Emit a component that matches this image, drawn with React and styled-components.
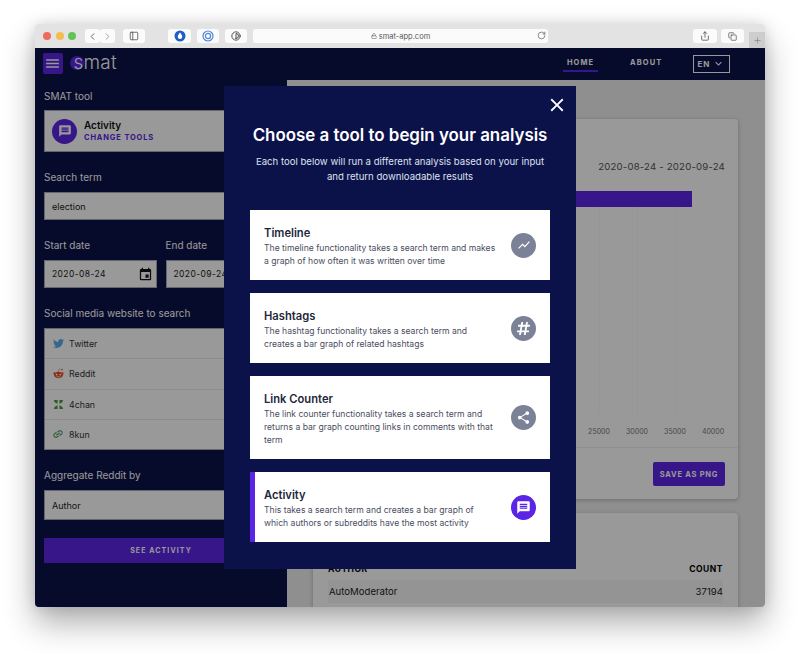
import React from "react";
import styled, { createGlobalStyle } from "styled-components";
import { MdMenu, MdMessage, MdEvent, MdClose, MdShowChart, MdShare, MdKeyboardArrowDown, MdLink } from "react-icons/md";
import { FaTwitter, FaRedditAlien, FaHashtag } from "react-icons/fa";
import { ChevronLeft, ChevronRight, PanelLeft, Lock, RotateCw, Share, Copy, Plus, Contrast } from "lucide-react";

const NAVY = "#0b1149";
const PURPLE = "#5a25e4";

const GlobalStyle = createGlobalStyle`
  html, body { margin: 0; padding: 0; background: #fff; }
  * { box-sizing: border-box; }
  body { font-family: "Inter", "Liberation Sans", sans-serif; }
`;

const Page = styled.div`
  width: 800px;
  height: 654px;
  padding: 24px 35px 47px;
  overflow: hidden;
`;

const Window = styled.div`
  position: relative;
  height: 583px;
  border-radius: 4px;
  display: flex;
  flex-direction: column;
  box-shadow: 0 16px 32px rgba(0, 0, 0, 0.32), 0 0 14px rgba(0, 0, 0, 0.12);
`;

const Chrome = styled.div`
  height: 24px;
  flex: none;
  background: #e3e3e3;
  border-radius: 4px 4px 0 0;
  display: flex;
  align-items: center;
  padding-left: 8px;
  position: relative;
`;

const Lights = styled.div`
  display: flex;
  gap: 4.5px;
  margin-right: 9px;
`;

const Light = styled.span`
  width: 8px;
  height: 8px;
  border-radius: 50%;
  background: ${(p) => p.$color};
`;

const ToolButton = styled.div`
  height: 14px;
  width: ${(p) => p.$w || 22}px;
  margin-left: ${(p) => p.$ml || 0}px;
  background: #fbfbfb;
  border-radius: 3px;
  display: flex;
  align-items: center;
  justify-content: center;
  color: #555;
  flex: none;
`;

const UrlBar = styled.div`
  width: 295px;
  height: 14px;
  margin-left: 6px;
  background: #fbfbfb;
  border-radius: 3px;
  display: flex;
  align-items: center;
  justify-content: center;
  gap: 2px;
  font-size: 7.5px;
  color: #555;
  position: relative;
`;

const Reload = styled.span`
  position: absolute;
  right: 2px;
  top: 2px;
  color: #666;
  display: flex;
`;

const NewTab = styled.div`
  position: absolute;
  right: 0;
  bottom: 0;
  width: 16px;
  height: 16px;
  background: #cdcdcd;
  display: flex;
  align-items: center;
  justify-content: center;
  color: #888;
`;

const App_ = styled.div`
  position: relative;
  flex: 1;
  display: flex;
  flex-direction: column;
  overflow: hidden;
  border-radius: 0 0 4px 4px;
  background: #eeeeee;
`;

const Nav = styled.div`
  height: 32px;
  flex: none;
  background: ${NAVY};
  display: flex;
  align-items: center;
  padding: 0 35px 0 8px;
  color: #fff;
`;

const MenuButton = styled.div`
  width: 20px;
  height: 21px;
  margin-top: -2px;
  border-radius: 2px;
  background: ${PURPLE};
  display: flex;
  align-items: center;
  justify-content: center;
  font-size: 17px;
`;

const Logo = styled.div`
  width: 49px;
  margin-left: 7px;
  margin-top: -3px;
  font-size: 19px;
  line-height: 20px;
  letter-spacing: 0.2px;
  font-weight: 300;
  display: flex;
  align-items: center;
  color: #fff;
`;

const LogoS = styled.span`
  width: 14px;
  height: 14px;
  border-radius: 50%;
  background: ${PURPLE};
  display: flex;
  align-items: center;
  justify-content: flex-end;
  line-height: 12px;
`;

const NavLink = styled.div`
  margin-left: ${(p) => p.$ml}px;
  width: ${(p) => p.$w}px;
  height: 32px;
  display: flex;
  align-items: center;
  justify-content: center;
  padding-bottom: 4px;
  font-size: 7.5px;
  font-weight: 700;
  letter-spacing: 1.1px;
  position: relative;
  &::after {
    content: "";
    display: ${(p) => (p.$active ? "block" : "none")};
    position: absolute;
    left: 0;
    right: 0;
    bottom: 8px;
    height: 2px;
    background: ${PURPLE};
  }
`;

const LangBox = styled.div`
  margin-left: 27px;
  width: 38px;
  height: 18px;
  margin-top: -1px;
  border: 1px solid #fff;
  display: flex;
  align-items: center;
  justify-content: center;
  gap: 2px;
  font-size: 8px;
  font-weight: 700;
  letter-spacing: 1px;
`;

const Body = styled.div`
  flex: 1;
  display: flex;
  min-height: 0;
`;

const Sidebar = styled.div`
  width: 252px;
  flex: none;
  background: ${NAVY};
  padding: 9px 9px 0;
  display: flex;
  flex-direction: column;
`;

const Label = styled.div`
  font-size: 10px;
  line-height: 14px;
  color: #fff;
  margin-bottom: 8px;
`;

const Field = styled.div`
  margin-bottom: 18px;
  flex: ${(p) => p.$flex || "none"};
  min-width: 0;
`;

const FirstLabel = styled(Label)`
  margin-bottom: 7px;
`;

const ToolBox = styled.div`
  height: 42px;
  background: #fff;
  border: 1px solid #aab;
  display: flex;
  align-items: center;
  padding-left: 7px;
  gap: 7px;
`;

const ToolCircle = styled.div`
  width: 25px;
  height: 25px;
  border-radius: 50%;
  background: ${PURPLE};
  color: #fff;
  font-size: 14px;
  display: flex;
  align-items: center;
  justify-content: center;
`;

const ToolName = styled.div`
  font-size: 10px;
  font-weight: 600;
  line-height: 13px;
  color: #111;
`;

const ToolChange = styled.div`
  font-size: 7.5px;
  font-weight: 700;
  letter-spacing: 0.85px;
  line-height: 12px;
  color: ${PURPLE};
`;

const Input = styled.div`
  height: ${(p) => p.$h || 28}px;
  background: #fff;
  border: 1px solid #aab;
  display: flex;
  align-items: center;
  justify-content: space-between;
  padding: 0 3px 0 7px;
  font-size: ${(p) => (p.$date ? 8.5 : 9)}px;
  letter-spacing: ${(p) => (p.$date ? "0.4px" : "0")};
  color: #222;
`;

const DateRow = styled.div`
  display: flex;
  gap: 9px;
`;

const SiteList = styled.div`
  background: #fff;
  border: 1px solid #aab;
  height: 122px;
  display: flex;
  flex-direction: column;
`;

const Site = styled.div`
  flex: 1;
  display: flex;
  align-items: center;
  gap: 5px;
  padding-left: 7px;
  font-size: 8.8px;
  color: #333;
  border-top: ${(p) => (p.$first ? "0" : "1px solid #e9e9e9")};
`;

const SiteIcon = styled.span`
  width: 12px;
  display: flex;
  justify-content: center;
  font-size: 11px;
  color: ${(p) => p.$color};
`;

const SeeButton = styled.div`
  height: 25px;
  background: ${PURPLE};
  color: #fff;
  display: flex;
  align-items: center;
  justify-content: center;
  font-size: 7px;
  font-weight: 700;
  letter-spacing: 1.1px;
`;

const Content = styled.div`
  flex: 1;
  padding: 39px 27px 0 26px;
  display: flex;
  flex-direction: column;
  gap: 14px;
  min-width: 0;
`;

const Card = styled.div`
  background: #fff;
  border-radius: 4px;
  box-shadow: 0 1px 4px rgba(0, 0, 0, 0.25);
  flex: none;
`;

const ChartCard = styled(Card)`
  height: 380px;
  display: flex;
  flex-direction: column;
`;

const RangeText = styled.div`
  text-align: right;
  padding: 41px 13px 0 0;
  height: 72px;
  font-size: 9.6px;
  line-height: 14px;
  letter-spacing: 0.2px;
  color: #555;
`;

const Plot = styled.div`
  margin-left: 96px;
  width: 304px;
  height: 224px;
  background-image: repeating-linear-gradient(
    to right,
    #fafafa 0,
    #fafafa 1px,
    transparent 1px,
    transparent 38px
  );
`;

const Bar = styled.div`
  height: 16px;
  background: ${PURPLE};
`;

const Axis = styled.div`
  margin-left: 267px;
  display: flex;
  height: 32px;
  align-items: center;
`;

const Tick = styled.div`
  width: 38px;
  text-align: center;
  font-size: 7px;
  color: #777;
`;

const CardFoot = styled.div`
  flex: 1;
  border-top: 1px solid #f0f0f0;
  display: flex;
  justify-content: flex-end;
  align-items: flex-start;
  padding: 14px 13px 0 0;
`;

const SaveButton = styled.div`
  width: 72px;
  height: 24px;
  border-radius: 2px;
  background: ${PURPLE};
  color: #fff;
  display: flex;
  align-items: center;
  justify-content: center;
  font-size: 7.5px;
  font-weight: 700;
  letter-spacing: 0.75px;
`;

const TableCard = styled(Card)`
  height: 120px;
  padding: 49px 15px 0 15px;
`;

const HeadRow = styled.div`
  display: flex;
  justify-content: space-between;
  font-size: 8.5px;
  line-height: 14px;
  font-weight: 700;
  letter-spacing: 0.5px;
  color: #000;
  padding-bottom: 4px;
`;

const DataRow = styled.div`
  display: flex;
  justify-content: space-between;
  align-items: center;
  height: 23px;
  background: #f7f7f7;
  padding-left: 1px;
  font-size: 9.6px;
  color: #222;
`;

const Overlay = styled.div`
  position: absolute;
  inset: 0;
  background: rgba(0, 0, 0, 0.4);
  display: flex;
  align-items: center;
  justify-content: center;
`;

const Modal = styled.div`
  position: relative;
  width: 352px;
  height: 483px;
  background: ${NAVY};
  padding: 38px 26px 0;
  color: #fff;
`;

const CloseButton = styled.div`
  position: absolute;
  top: 8px;
  right: 8px;
  font-size: 22px;
  line-height: 0;
  color: #fff;
`;

const ModalTitle = styled.div`
  font-size: 16.9px;
  line-height: 22px;
  font-weight: 600;
  text-align: center;
  white-space: nowrap;
`;

const ModalSub = styled.div`
  margin-top: 8px;
  font-size: 9.6px;
  line-height: 15px;
  text-align: center;
  color: #dfe1ee;
  margin-bottom: 26px;
`;

const Options = styled.div`
  display: flex;
  flex-direction: column;
  gap: 13px;
`;

const Option = styled.div`
  background: #fff;
  border-left: ${(p) => (p.$active ? `5px solid ${PURPLE}` : "0")};
  padding: 16px 14px 12px ${(p) => (p.$active ? 9 : 14)}px;
  display: flex;
  align-items: center;
  justify-content: space-between;
`;

const OptionText = styled.div`
  width: 232px;
`;

const OptionName = styled.div`
  font-size: 11.2px;
  line-height: 15px;
  font-weight: 600;
  color: #23263a;
`;

const OptionDesc = styled.div`
  margin-top: 1px;
  font-size: 8.6px;
  line-height: 13px;
  color: #4a4d5e;
`;

const OptionIcon = styled.div`
  width: 25px;
  height: 25px;
  margin-top: -4px;
  border-radius: 50%;
  background: ${(p) => (p.$active ? PURPLE : "#7b8197")};
  color: #fff;
  display: flex;
  align-items: center;
  justify-content: center;
  font-size: ${(p) => p.$size || 14}px;
`;

const FourChanIcon = () => (
  <svg width="11" height="11" viewBox="0 0 12 12" fill="currentColor">
    <path d="M1 1h4v4C3 5 1 3 1 1zM11 1H7v4c2 0 4-2 4-4zM1 11h4V7c-2 0-4 2-4 4zM11 11H7V7c2 0 4 2 4 4z" />
  </svg>
);

const DropIcon = () => (
  <svg width="12" height="12" viewBox="0 0 12 12">
    <circle cx="6" cy="6" r="5.5" fill="#1f5fc4" />
    <path d="M6 2.5C7.5 4.5 8.2 5.5 8.2 6.8a2.2 2.2 0 0 1-4.4 0C3.8 5.5 4.5 4.5 6 2.5z" fill="#fff" />
  </svg>
);

const RingsIcon = () => (
  <svg width="12" height="12" viewBox="0 0 12 12" fill="none" stroke="#4f86d8">
    <circle cx="6" cy="6" r="5" strokeWidth="1.2" />
    <circle cx="6" cy="6" r="2.6" strokeWidth="1.2" />
  </svg>
);

const sites = [
  { name: "Twitter", color: "#55acee", icon: <FaTwitter /> },
  { name: "Reddit", color: "#e8562a", icon: <FaRedditAlien /> },
  { name: "4chan", color: "#4f9a3d", icon: <FourChanIcon /> },
  { name: "8kun", color: "#3c9a4c", icon: <MdLink style={{ transform: "rotate(-30deg)", fontSize: 14 }} /> },
];

const tools = [
  {
    name: "Timeline",
    desc: "The timeline functionality takes a search term and makes a graph of how often it was written over time",
    icon: <MdShowChart />,
    size: 14,
  },
  {
    name: "Hashtags",
    desc: "The hashtag functionality takes a search term and creates a bar graph of related hashtags",
    icon: <FaHashtag />,
    size: 15,
  },
  {
    name: "Link Counter",
    desc: "The link counter functionality takes a search term and returns a bar graph counting links in comments with that term",
    icon: <MdShare />,
    size: 15,
  },
  {
    name: "Activity",
    desc: "This takes a search term and creates a bar graph of which authors or subreddits have the most activity",
    icon: <MdMessage />,
    size: 15,
    active: true,
  },
];

const ticks = [25000, 30000, 35000, 40000];
const topCount = 37194;

const App = () => {
  return (
    <Page>
      <GlobalStyle />
      <Window>
        <Chrome>
          <Lights>
            <Light $color="#ee6a5f" />
            <Light $color="#f5bd4f" />
            <Light $color="#61c454" />
          </Lights>
          <ToolButton $w={15}><ChevronLeft size={11} /></ToolButton>
          <ToolButton $w={15}><ChevronRight size={11} color="#999" /></ToolButton>
          <ToolButton $ml={8}><PanelLeft size={10} /></ToolButton>
          <ToolButton $ml={23} $w={23}><DropIcon /></ToolButton>
          <ToolButton $ml={6}><RingsIcon /></ToolButton>
          <ToolButton $ml={6}><Contrast size={10} color="#333" /></ToolButton>
          <UrlBar>
            <Lock size={6} />
            smat-app.com
            <Reload><RotateCw size={9} /></Reload>
          </UrlBar>
          <ToolButton $ml={145} $w={24}><Share size={10} /></ToolButton>
          <ToolButton $ml={4} $w={23}><Copy size={9} /></ToolButton>
          <NewTab><Plus size={9} /></NewTab>
        </Chrome>
        <App_>
          <Nav>
            <MenuButton><MdMenu /></MenuButton>
            <Logo><LogoS>s</LogoS>mat</Logo>
            <NavLink $ml={446} $w={35} $active>HOME</NavLink>
            <NavLink $ml={29} $w={40}>ABOUT</NavLink>
            <LangBox>EN <MdKeyboardArrowDown size={13} /></LangBox>
          </Nav>
          <Body>
            <Sidebar>
              <Field>
                <FirstLabel>SMAT tool</FirstLabel>
                <ToolBox>
                  <ToolCircle><MdMessage /></ToolCircle>
                  <div>
                    <ToolName>Activity</ToolName>
                    <ToolChange>CHANGE TOOLS</ToolChange>
                  </div>
                </ToolBox>
              </Field>
              <Field>
                <Label>Search term</Label>
                <Input>election</Input>
              </Field>
              <DateRow>
                <Field $flex="1">
                  <Label>Start date</Label>
                  <Input $date>2020-08-24 <MdEvent size={15} color="#111" /></Input>
                </Field>
                <Field $flex="1">
                  <Label>End date</Label>
                  <Input $date>2020-09-24 <MdEvent size={15} color="#111" /></Input>
                </Field>
              </DateRow>
              <Field>
                <Label>Social media website to search</Label>
                <SiteList>
                  {sites.map((s, i) => (
                    <Site key={s.name} $first={i === 0}>
                      <SiteIcon $color={s.color}>{s.icon}</SiteIcon>
                      {s.name}
                    </Site>
                  ))}
                </SiteList>
              </Field>
              <Field>
                <Label>Aggregate Reddit by</Label>
                <Input $h={30}>Author</Input>
              </Field>
              <SeeButton>SEE ACTIVITY</SeeButton>
            </Sidebar>
            <Content>
              <ChartCard>
                <RangeText>2020-08-24 - 2020-09-24</RangeText>
                <Plot>
                  <Bar style={{ width: `${(topCount / 40000) * 100}%` }} />
                </Plot>
                <Axis>
                  {ticks.map((t) => (
                    <Tick key={t}>{t}</Tick>
                  ))}
                </Axis>
                <CardFoot>
                  <SaveButton>SAVE AS PNG</SaveButton>
                </CardFoot>
              </ChartCard>
              <TableCard>
                <HeadRow>
                  <span>AUTHOR</span>
                  <span>COUNT</span>
                </HeadRow>
                <DataRow>
                  <span>AutoModerator</span>
                  <span>{topCount}</span>
                </DataRow>
              </TableCard>
            </Content>
          </Body>
          <Overlay>
            <Modal>
              <CloseButton><MdClose /></CloseButton>
              <ModalTitle>Choose a tool to begin your analysis</ModalTitle>
              <ModalSub>
                Each tool below will run a different analysis based on your input
                <br />
                and return downloadable results
              </ModalSub>
              <Options>
                {tools.map((t) => (
                  <Option key={t.name} $active={t.active}>
                    <OptionText>
                      <OptionName>{t.name}</OptionName>
                      <OptionDesc>{t.desc}</OptionDesc>
                    </OptionText>
                    <OptionIcon $active={t.active} $size={t.size}>{t.icon}</OptionIcon>
                  </Option>
                ))}
              </Options>
            </Modal>
          </Overlay>
        </App_>
      </Window>
    </Page>
  );
};

export default App;
